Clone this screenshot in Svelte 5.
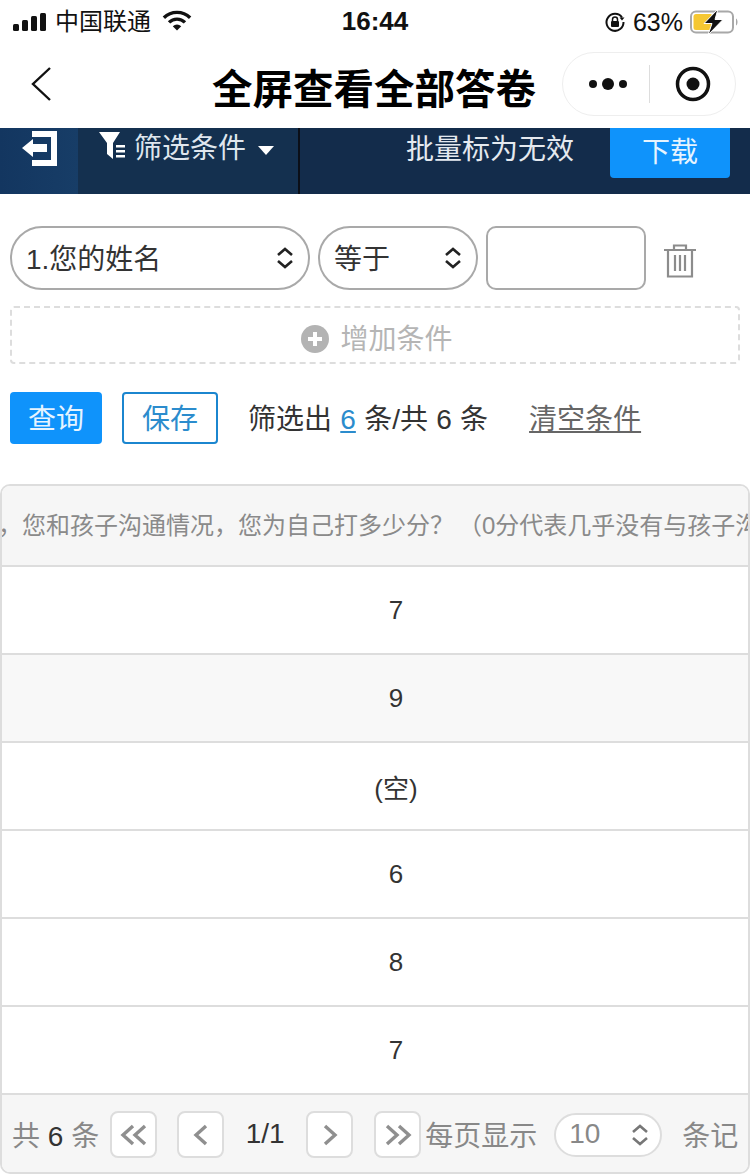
<script>
  const rows = ['7', '9', '(空)', '6', '8', '7'];
</script>

<main>
  <div class="status">
    <div class="status-left">
      <svg class="signal" width="34" height="18" viewBox="0 0 34 18">
        <rect x="0" y="11" width="6" height="7" rx="1.5" fill="#111" />
        <rect x="9" y="7" width="6" height="11" rx="1.5" fill="#111" />
        <rect x="18" y="3" width="6" height="15" rx="1.5" fill="#111" />
        <rect x="27" y="0" width="6" height="18" rx="1.5" fill="#111" />
      </svg>
      <span class="carrier">中国联通</span>
      <svg class="wifi" width="30" height="22" viewBox="0 0 32 22">
        <path d="M2 7.500a20 20 0 0 1 28 0" fill="none" stroke="#111" stroke-width="3.600" />
        <path d="M7.500 12.500a12 12 0 0 1 17 0" fill="none" stroke="#111" stroke-width="3.600" />
        <path d="M11.500 16.500a6.500 6.500 0 0 1 9 0L16 21z" fill="#111" />
      </svg>
    </div>
    <span class="time">16:44</span>
    <div class="status-right">
      <svg width="22" height="22" viewBox="0 0 22 22">
        <path d="M18 6.500A8.500 8.500 0 1 0 19.500 11" fill="none" stroke="#111" stroke-width="2" />
        <path d="M15.500 6.500h5l-2.500 3z" fill="#111" />
        <rect x="7" y="10" width="8" height="6" rx="1" fill="#111" />
        <path d="M8.500 10V8.500a2.500 2.500 0 0 1 5 0V10" fill="none" stroke="#111" stroke-width="1.500" />
      </svg>
      <span class="pct">63%</span>
      <svg width="50" height="26" viewBox="0 0 50 26">
        <rect x="1" y="2.500" width="42" height="21" rx="5" fill="none" stroke="#a8a8a8" stroke-width="2" />
        <rect x="3.500" y="5" width="19" height="16" rx="2.500" fill="#f5c732" />
        <path d="M46 9.500c2 1 2 6 0 7z" fill="#a8a8a8" />
        <path d="M28 0 14 14.500h8L18 26 33 10.500h-8z" fill="#111" stroke="#fff" stroke-width="1" />
      </svg>
    </div>
  </div>

  <div class="nav">
    <svg class="back" width="24" height="38" viewBox="0 0 24 38">
      <path d="M20 1 3 17l17 16" fill="none" stroke="#111" stroke-width="2.400" />
    </svg>
    <h1>全屏查看全部答卷</h1>
    <div class="capsule">
      <svg width="38" height="14" viewBox="0 0 38 14">
        <circle cx="4" cy="7" r="4" fill="#111" />
        <circle cx="19" cy="7" r="6" fill="#111" />
        <circle cx="34" cy="7" r="4" fill="#111" />
      </svg>
      <i class="capsule-line"></i>
      <svg width="36" height="36" viewBox="0 0 36 36">
        <circle cx="18" cy="18" r="15.500" fill="none" stroke="#111" stroke-width="3.500" />
        <circle cx="18" cy="18" r="6.500" fill="#111" />
      </svg>
    </div>
  </div>

  <div class="toolbar">
    <div class="exit">
      <svg width="37" height="37" viewBox="0 0 37 37">
        <path d="M11 1h25v35H11v-6h19V7H11z" fill="#fff" />
        <path d="M1 18l11-9v5h14v8H12v5z" fill="#fff" />
      </svg>
    </div>
    <div class="filter">
      <svg width="28" height="30" viewBox="0 0 28 30">
        <path d="M0 1h21l-7 11v16l-6-5V12z" fill="#fff" />
        <path d="M17 14h9v2.500h-9zM17 19h9v2.500h-9zM17 24h9v2.500h-9z" fill="#fff" />
      </svg>
      <span>筛选条件</span>
      <i class="caret"></i>
    </div>
    <div class="toolbar-right">
      <span class="batch">批量标为无效</span>
      <button class="download">下载</button>
    </div>
  </div>

  <div class="conditions">
    <div class="select name">
      <span>1.您的姓名</span>
      <svg width="18" height="22" viewBox="0 0 18 22">
        <path d="M2 8l7-6 7 6M2 14l7 6 7-6" fill="none" stroke="#222" stroke-width="2.600" />
      </svg>
    </div>
    <div class="select op">
      <span>等于</span>
      <svg width="18" height="22" viewBox="0 0 18 22">
        <path d="M2 8l7-6 7 6M2 14l7 6 7-6" fill="none" stroke="#222" stroke-width="2.600" />
      </svg>
    </div>
    <div class="input"></div>
    <svg class="trash" width="32" height="34" viewBox="0 0 32 34">
      <path d="M0 6h32M10 6V1.500h12V6M4 6v26.500h24V6M11 11v16M16 11v16M21 11v16" fill="none" stroke="#8c8c8c" stroke-width="2.200" />
    </svg>
  </div>

  <div class="add">
    <svg width="28" height="28" viewBox="0 0 28 28">
      <circle cx="14" cy="14" r="14" fill="#b3b3b3" />
      <path d="M14 7v14M7 14h14" stroke="#fff" stroke-width="4" />
    </svg>
    <span>增加条件</span>
  </div>

  <div class="actions">
    <button class="query">查询</button>
    <button class="save">保存</button>
    <span class="result">筛选出 <a href="#top">6</a> 条/共 6 条</span>
    <span class="clear">清空条件</span>
  </div>

  <div class="table">
    <div class="thead">，您和孩子沟通情况，您为自己打多少分？<span class="paren">（0分代表几乎没有与孩子沟通</span></div>
    {#each rows as row, i}
      <div class="row" class:alt={i === 1}>{row}</div>
    {/each}
    <div class="pager">
      <span class="total">共 <b>6</b> 条</span>
      <div class="page-btn first">
        <svg width="28" height="24" viewBox="0 0 28 24">
          <path d="M13 3 3 12l10 9M25 3l-10 9 10 9" fill="none" stroke="#8f8f8f" stroke-width="3.400" />
        </svg>
      </div>
      <div class="page-btn prev">
        <svg width="16" height="24" viewBox="0 0 16 24">
          <path d="M13 3 3 12l10 9" fill="none" stroke="#8f8f8f" stroke-width="3.400" />
        </svg>
      </div>
      <span class="page-num">1/1</span>
      <div class="page-btn next">
        <svg width="16" height="24" viewBox="0 0 16 24">
          <path d="m3 3 10 9-10 9" fill="none" stroke="#8f8f8f" stroke-width="3.400" />
        </svg>
      </div>
      <div class="page-btn last">
        <svg width="28" height="24" viewBox="0 0 28 24">
          <path d="m3 3 10 9-10 9M15 3l10 9-10 9" fill="none" stroke="#8f8f8f" stroke-width="3.400" />
        </svg>
      </div>
      <span class="per">每页显示</span>
      <div class="size">
        <span>10</span>
        <svg width="18" height="22" viewBox="0 0 18 22">
          <path d="M2 8l7-6 7 6M2 14l7 6 7-6" fill="none" stroke="#777" stroke-width="2.600" />
        </svg>
      </div>
      <span class="unit">条记</span>
    </div>
  </div>
</main>

<style>
  :global(body) {
    background: #fff;
  }

  main {
    width: 750px;
    height: 1176px;
    overflow: hidden;
    font-family: "Liberation Sans", "Noto Sans CJK SC", sans-serif;
    font-size: 28px;
    color: #333;
    background: #fff;
  }

  .status {
    height: 44px;
    display: grid;
    grid-template-columns: 1fr auto 1fr;
    align-items: center;
    color: #111;
    font-size: 24px;
  }

  .status-left {
    padding-left: 13px;
    display: flex;
    align-items: center;
  }

  .carrier {
    margin-left: 8px;
    padding-bottom: 6px;
  }

  .wifi {
    margin-left: 11px;
    margin-top: -2px;
  }

  .time {
    font-size: 26px;
    font-weight: 700;
    padding-bottom: 2px;
  }

  .status-right {
    display: flex;
    align-items: center;
    justify-content: flex-end;
    gap: 7px;
    padding-right: 10px;
  }

  .pct {
    font-size: 25px;
  }

  .nav {
    height: 84px;
    position: relative;
    display: flex;
    align-items: center;
    padding-left: 30px;
  }

  h1 {
    margin: 0 0 0 158px;
    font-size: 40.500px;
    font-weight: 700;
    color: #000;
    white-space: nowrap;
  }

  .capsule {
    position: absolute;
    left: 562px;
    top: 8px;
    width: 174px;
    height: 64px;
    box-sizing: border-box;
    border: 1px solid #eee;
    border-radius: 32px;
    display: flex;
    align-items: center;
    padding-left: 26px;
  }

  .capsule-line {
    width: 1px;
    height: 38px;
    background: #ddd;
    margin: 0 25px 0 22px;
  }

  .toolbar {
    height: 66px;
    display: flex;
    background: #132c4b;
    color: #fff;
  }

  .exit {
    width: 78px;
    box-sizing: border-box;
    padding: 2px 0 0 21px;
    background: linear-gradient(90deg, #133660, #173d67);
  }

  .filter {
    width: 222px;
    box-sizing: border-box;
    border-right: 2px solid #0b0f18;
    padding: 3px 0 0 21px;
    display: flex;
    align-items: flex-start;
    background: #14304f;
    color: #dfe6ee;
  }

  .filter span {
    margin-left: 7px;
    line-height: 36px;
  }

  .caret {
    margin: 15px 0 0 12px;
    border: 8px solid transparent;
    border-top: 9px solid #fff;
    border-bottom: 0;
  }

  .toolbar-right {
    flex: 1;
    display: flex;
    justify-content: flex-end;
    align-items: flex-start;
    padding-right: 20px;
  }

  .batch {
    line-height: 44px;
    color: #e4e9ef;
    margin-right: 36px;
  }

  .download {
    width: 120px;
    height: 50px;
    border: 0;
    padding: 0 0 7px;
    border-radius: 0 0 4px 4px;
    background: #0f93fb;
    color: #e6f4ff;
    font: inherit;
  }

  .conditions {
    margin-top: 32px;
    padding-left: 10px;
    display: flex;
    align-items: center;
    gap: 8px;
  }

  .select {
    height: 64px;
    box-sizing: border-box;
    border: 2px solid #a9a9a9;
    border-radius: 32px;
    display: flex;
    align-items: center;
    justify-content: space-between;
    padding: 0 14px 0 14px;
    color: #333;
  }

  .select span {
    padding-bottom: 2px;
  }

  .name {
    width: 300px;
  }

  .op {
    width: 160px;
  }

  .input {
    width: 160px;
    height: 64px;
    box-sizing: border-box;
    border: 2px solid #a9a9a9;
    border-radius: 10px;
  }

  .trash {
    margin: 6px 0 0 10px;
  }

  .add {
    margin: 16px 0 0 10px;
    width: 730px;
    height: 58px;
    box-sizing: border-box;
    border: 2px dashed #ddd;
    border-radius: 4px;
    display: flex;
    align-items: center;
    justify-content: center;
    gap: 11px;
    padding: 8px 0 0 4px;
    color: #b5b5b5;
  }

  .add span {
    padding-bottom: 4px;
  }

  .actions {
    margin-top: 28px;
    padding-left: 10px;
    height: 52px;
    display: flex;
    align-items: center;
  }

  .query,
  .save {
    height: 52px;
    padding: 0 0 2px;
    border-radius: 4px;
    font: inherit;
  }

  .query {
    width: 92px;
    border: 0;
    background: #0f93fb;
    color: #e6f4ff;
  }

  .save {
    width: 96px;
    margin-left: 20px;
    border: 2px solid #1b86cf;
    background: #fff;
    color: #2b8ccd;
  }

  .result {
    margin-left: 30px;
    padding-bottom: 2px;
    white-space: nowrap;
    word-spacing: 0.5px;
  }

  .result a {
    color: #2b8ccd;
  }

  .clear {
    margin-left: 41px;
    padding-bottom: 2px;
    color: #666;
    text-decoration: underline;
    white-space: nowrap;
  }

  .table {
    margin-top: 40px;
    height: 690px;
    box-sizing: border-box;
    border: 2px solid #ddd;
    border-radius: 10px;
    overflow: hidden;
  }

  .thead {
    height: 79px;
    line-height: 79px;
    box-sizing: border-box;
    background: #f6f6f6;
    color: #8a8a8a;
    font-size: 24px;
    white-space: nowrap;
    overflow: hidden;
    text-indent: -4px;
  }

  .paren {
    margin-left: 4px;
  }

  .row {
    height: 88px;
    box-sizing: border-box;
    border-top: 2px solid #ddd;
    display: flex;
    align-items: center;
    justify-content: center;
    padding-left: 42px;
    font-size: 26px;
    color: #333;
  }

  .alt {
    background: #f8f8f8;
  }

  .pager {
    height: 81px;
    box-sizing: border-box;
    border-top: 2px solid #ddd;
    background: #f6f6f6;
    display: flex;
    align-items: center;
    padding-left: 10px;
    color: #888;
    white-space: nowrap;
  }

  .total,
  .per,
  .unit,
  .size span {
    padding-bottom: 2px;
  }

  .total b {
    font-weight: 400;
    color: #333;
  }

  .page-btn {
    width: 47px;
    height: 47px;
    box-sizing: border-box;
    border: 2px solid #ddd;
    border-radius: 8px;
    background: #fff;
    display: flex;
    align-items: center;
    justify-content: center;
  }

  .first {
    margin-left: 11px;
  }

  .prev {
    margin-left: 20px;
  }

  .page-num {
    width: 82px;
    text-align: center;
    font-size: 28px;
    color: #333;
    padding-bottom: 2px;
  }

  .last {
    margin-left: 21px;
  }

  .per {
    margin-left: 4px;
  }

  .size {
    width: 108px;
    height: 44px;
    margin-left: 17px;
    box-sizing: border-box;
    border: 2px solid #ddd;
    border-radius: 22px;
    background: #fff;
    display: flex;
    align-items: center;
    justify-content: space-between;
    padding: 0 11px 0 13px;
  }

  .unit {
    margin-left: 20px;
  }
</style>
